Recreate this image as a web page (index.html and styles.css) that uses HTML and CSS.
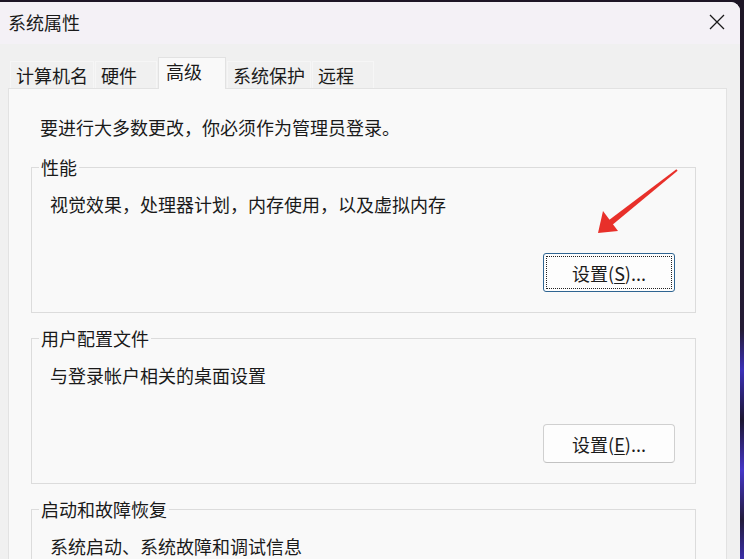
FILE: index.html
```html
<!DOCTYPE html>
<html lang="zh-CN">
<head>
  <meta charset="UTF-8">
  <title>系统属性</title>
  <link rel="stylesheet" href="styles.css">
</head>
<body>
  <div class="window">
    <div class="title-bar">
      <span class="title">系统属性</span>
      <button class="close-btn" aria-label="关闭">
        <svg width="16" height="16" viewBox="0 0 16 16">
          <path d="M1 1 L15 15 M15 1 L1 15" stroke="#1a1a1a" stroke-width="1.3" fill="none"/>
        </svg>
      </button>
    </div>

    <div class="tabs">
      <div class="tab">计算机名</div>
      <div class="tab">硬件</div>
      <div class="tab active">高级</div>
      <div class="tab">系统保护</div>
      <div class="tab">远程</div>
    </div>

    <div class="panel">
      <p class="notice">要进行大多数更改，你必须作为管理员登录。</p>

      <fieldset class="group">
        <legend>性能</legend>
        <p class="group-desc">视觉效果，处理器计划，内存使用，以及虚拟内存</p>
        <div class="group-actions">
          <button class="win-btn focused">设置(<u>S</u>)...</button>
        </div>
      </fieldset>

      <fieldset class="group">
        <legend>用户配置文件</legend>
        <p class="group-desc">与登录帐户相关的桌面设置</p>
        <div class="group-actions">
          <button class="win-btn">设置(<u>E</u>)...</button>
        </div>
      </fieldset>

      <fieldset class="group">
        <legend>启动和故障恢复</legend>
        <p class="group-desc">系统启动、系统故障和调试信息</p>
      </fieldset>
    </div>

    <!-- annotation arrow drawn on the screenshot -->
    <svg class="arrow" width="100" height="85" viewBox="0 0 100 85">
      <polygon points="87.6,10.8 86.4,9.2 18.1,60.7 21.9,65.3" fill="#e8302a"/>
      <polygon points="8,73 13,51 28,71" fill="#e8302a"/>
    </svg>
  </div>
</body>
</html>
```

FILE: styles.css
```css
* {
  margin: 0;
  padding: 0;
  box-sizing: border-box;
}

body {
  width: 744px;
  height: 559px;
  overflow: hidden;
  font-family: 'Noto Sans CJK SC', 'Noto Sans', sans-serif;
  font-size: 18px;
  color: #1a1a1a;
  background: linear-gradient(to bottom, #1e1626 0, #241a34 330px, #3b30b8 370px, #1c1530 420px, #4536c8 470px, #221a3a 520px, #3a2ea8 559px);
}

.window {
  position: relative;
  width: 740px;
  height: 557px;
  margin-top: 2px;
  background-color: #f0f0f0;
  border-top-right-radius: 9px;
  overflow: hidden;
}

.title-bar {
  height: 42px;
  display: flex;
  align-items: center;
  justify-content: space-between;
  padding: 0 14px 3px 8px;
  background-color: #f4f1f6;
}

.title {
  font-size: 18px;
  line-height: 24px;
}

.close-btn {
  background: none;
  border: none;
  width: 18px;
  height: 18px;
  display: flex;
  align-items: center;
  justify-content: center;
}

.tabs {
  display: flex;
  align-items: flex-end;
  gap: 1px;
  margin: 13px 0 0 10px;
  height: 31px;
}

.tab {
  min-width: 62px;
  height: 27px;
  padding: 0 5px;
  line-height: 26px;
  font-size: 18px;
  border: 1px solid #f6f6f6;
  border-bottom: none;
}

.tab.active {
  position: relative;
  z-index: 1;
  min-width: 68px;
  height: 32px;
  margin-bottom: -1px;
  padding: 0 7px;
  line-height: 27px;
  background-color: #f9f9f9;
  border-color: #e2e2e2;
}

.panel {
  margin: 0 13px 0 8px;
  height: 480px;
  padding: 26px 30px 0 22px;
  background-color: #f9f9f9;
  border: 1px solid #e2e2e2;
  border-bottom: none;
}

.notice {
  margin: 0 0 16px 9px;
  line-height: 24px;
}

.group {
  border: 1px solid #dcdcdc;
  padding: 13px 20px 20px 18px;
  margin-bottom: 13px;
}

.group legend {
  margin-left: -11px;
  padding: 0 2px;
  line-height: 24px;
}

.group-desc {
  line-height: 24px;
  margin-bottom: 37px;
}

.group-actions {
  display: flex;
  justify-content: flex-end;
}

.win-btn {
  position: relative;
  width: 132px;
  height: 39px;
  font-family: inherit;
  font-size: 18px;
  color: #1a1a1a;
  background-color: #fdfdfd;
  border: 1px solid #d0d0d0;
  border-bottom-color: #c2c2c2;
  border-radius: 4px;
}

.win-btn u {
  text-decoration-thickness: 1px;
  text-underline-offset: 2px;
}

.win-btn.focused {
  border-color: #2f6592;
  border-radius: 3px;
}

.win-btn.focused::after {
  content: "";
  position: absolute;
  top: 2px;
  left: 2px;
  right: 2px;
  bottom: 2px;
  border: 1px dotted #222;
}

.arrow {
  position: absolute;
  left: 590px;
  top: 158px;
}
```
